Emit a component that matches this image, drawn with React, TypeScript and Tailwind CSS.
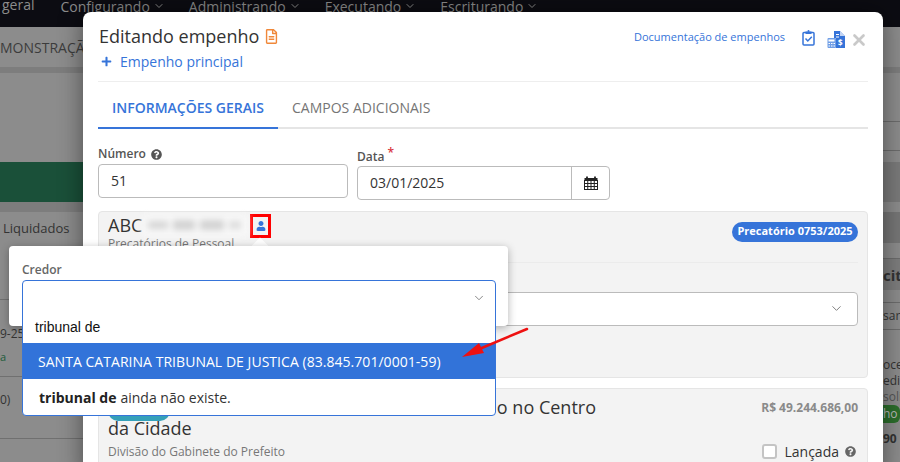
import { ChevronDown, X } from "lucide-react";
import { FaPlus, FaQuestionCircle, FaRegFileAlt, FaUser } from "react-icons/fa";

const BudgetIcon = () => (
  <svg width="20" height="17" viewBox="0 0 20 17" className="shrink-0">
    <path d="M7 0h6l5 5v12H7z" fill="#3674d9" />
    <path d="M13 0l5 5h-5z" fill="#fff" opacity="0.7" />
    <path d="M9 3h3v1H9zM9 5.500h3v1H9z" fill="#fff" />
    <rect x="0" y="7" width="9" height="10" rx="1" fill="#fff" />
    <rect x="0.500" y="7" width="8.500" height="10" rx="1" fill="#6f9ee6" />
    <rect x="1.500" y="8.500" width="6" height="2" fill="#fff" />
    <path d="M1.500 12h1.500v1H1.500zM4 12h1.500v1H4zM6.500 12H8v1H6.500zM1.500 14.500h1.500v1H1.500zM4 14.500h1.500v1H4zM6.500 14.500H8v1H6.500z" fill="#fff" />
    <text x="11" y="14.500" fontSize="8" fontWeight="700" fill="#fff" fontFamily="'Open Sans', sans-serif">$</text>
  </svg>
);

const ClipboardIcon = () => (
  <svg width="13" height="16" viewBox="0 0 13 16" className="shrink-0">
    <rect x="1" y="2.500" width="11" height="12.500" rx="1" fill="none" stroke="#3674d9" strokeWidth="1.500" />
    <rect x="3.500" y="1.500" width="6" height="2.500" fill="#3674d9" />
    <rect x="5.500" y="0" width="2" height="2" rx="1" fill="#3674d9" />
    <path d="M3.500 8.500l2.300 2.500 4-4.300" fill="none" stroke="#3674d9" strokeWidth="1.500" />
  </svg>
);

const CalendarIcon = () => (
  <svg width="14" height="14" viewBox="0 0 14 14" className="shrink-0">
    <path d="M3 0.500v3M11 0.500v3" stroke="#222" strokeWidth="1.800" />
    <rect x="0.500" y="2" width="13" height="3" fill="#222" />
    <rect x="0.500" y="4.500" width="13" height="9" fill="none" stroke="#222" />
    <path d="M3.750 5v8M7 5v8M10.250 5v8M1 7.500h12M1 10.500h12" stroke="#222" strokeWidth="1" />
  </svg>
);

const NavItem = ({ label }: { label: string }) => (
  <div className="flex items-center gap-[3px]">
    <span>{label}</span>
    <ChevronDown size={12} strokeWidth={2} />
  </div>
);

const Background = () => (
  <div className="flex h-full flex-col">
    <div className="h-[27px] shrink-0 bg-[#0c0c12] text-[14px] leading-[9px] text-[#8c8c8c]">
      <div className="flex gap-[24px] pl-[2px]">
        <span className="mr-[2px]">geral</span>
        <NavItem label="Configurando" />
        <NavItem label="Administrando" />
        <NavItem label="Executando" />
        <NavItem label="Escriturando" />
      </div>
    </div>
    <div className="flex min-h-0 flex-1 justify-between bg-[#8c8c8c] text-[#333]">
      <div className="flex w-[83px] flex-col text-[13px]">
        <div className="flex h-[40px] shrink-0 items-center text-[14px] whitespace-nowrap text-[#3c3c3c]">MONSTRAÇÃ</div>
        <div className="h-[6px] shrink-0 bg-[#7d7d7d]" />
        <div className="h-[89px] shrink-0" />
        <div className="h-[40px] shrink-0 bg-[#1a5039]" />
        <div className="h-[10px] shrink-0 bg-[#7d7d7d]" />
        <div className="flex h-[33px] shrink-0 items-center pl-[3px]">Liquidados</div>
        <div className="h-[54px] shrink-0" />
        <div className="h-[77px] shrink-0 border-t border-[#707070] pt-[26px] text-[12px] leading-[16px]">
          <div>9-25)</div>
          <div className="mt-[8px] text-[11px] leading-[14px] text-[#1d5c3a]">a</div>
        </div>
        <div className="h-[62px] shrink-0 border-t border-[#707070] pt-[15px] text-[12px] leading-[16px]">0)</div>
        <div className="flex-1 border-t border-[#707070]" />
      </div>
      <div className="flex w-[17px] flex-col overflow-hidden text-[12px] leading-[16px] whitespace-nowrap">
        <div className="h-[40px] shrink-0" />
        <div className="h-[6px] shrink-0 bg-[#7d7d7d]" />
        <div className="h-[48px] shrink-0" />
        <div className="h-[29px] shrink-0 border-t border-[#6c6c6c]" />
        <div className="h-[12px] shrink-0 border-t border-[#6c6c6c]" />
        <div className="h-[40px] shrink-0 bg-[#7a7a7a]" />
        <div className="h-[10px] shrink-0" />
        <div className="h-[31px] shrink-0 bg-[#767676]" />
        <div className="h-[15px] shrink-0" />
        <div className="flex h-[32px] shrink-0 items-center border-t border-[#6c6c6c] bg-[#7d7d7d] text-[15px] font-bold">cit</div>
        <div className="h-[12px] shrink-0" />
        <div className="flex h-[28px] shrink-0 items-center border-y border-[#6c6c6c]">sar</div>
        <div className="h-[27px] shrink-0" />
        <div>oces</div>
        <div>edic</div>
        <div className="text-[#555]">solic</div>
        <div className="h-[18px] shrink-0 rounded-r-[6px] bg-[#2c6e2c] leading-[18px] text-[#bbb]">ho</div>
        <div className="mt-[8px] font-bold">90</div>
      </div>
    </div>
  </div>
);

const Modal = () => (
  <div className="absolute top-[12px] left-[83px] h-[470px] w-[800px] rounded-[8px] bg-white px-[15px] shadow-[0_0_24px_rgba(0,0,0,0.45)]">
    <div className="flex h-[69.500px] justify-between border-b border-[#eeeeee] pt-[11px]">
      <div className="flex flex-col pl-[1px]">
        <div className="flex h-[26px] items-center gap-[5px] text-[18px] text-[#333]">
          Editando empenho
          <FaRegFileAlt size={15} className="text-[#f0883a]" />
        </div>
        <div className="mt-[2px] flex items-center gap-[8px] pl-[2px] text-[14px] text-[#3674d9]">
          <FaPlus size={11} />
          Empenho principal
        </div>
      </div>
      <div className="flex h-[26px] items-start pt-[7px] text-[#3674d9]">
        <span className="-mt-[1px] mr-[3px] text-[11px]">Documentação de empenhos</span>
        <div className="ml-[14px]"><ClipboardIcon /></div>
        <div className="mt-[1px] ml-[12px]"><BudgetIcon /></div>
        <X size={18} strokeWidth={3.5} className="mt-[1px] ml-[3px] text-[#c9c9c9]" />
      </div>
    </div>
    <div className="flex h-[47px] items-end border-b-2 border-[#e5e5e5] text-[14px]">
      <div className="-mb-[2px] flex h-[32px] w-[180px] items-start justify-center border-b-2 border-[#3674d9] font-semibold text-[#3674d9]">INFORMAÇÕES GERAIS</div>
      <div className="flex h-[30px] items-start pl-[14px] text-[#757575]">CAMPOS ADICIONAIS</div>
    </div>
    <div className="flex gap-[9px] pt-[16px]">
      <div className="w-[250px]">
        <div className="flex h-[19px] items-center gap-[5px] text-[12px] font-semibold text-[#555]">
          Número
          <FaQuestionCircle size={11} />
        </div>
        <div className="flex h-[34px] items-center rounded-[4px] border border-[#bbbbbb] pl-[12px] text-[14px] text-[#333]">51</div>
      </div>
      <div className="w-[253px]">
        <div className="flex h-[21px] text-[12px] font-semibold text-[#555]">
          <span className="mt-[3px]">Data</span>
          <span className="-mt-[1px] ml-[3px] text-[12px] text-[#d9363e]">*</span>
        </div>
        <div className="flex h-[34px] rounded-[4px] border border-[#bbbbbb] text-[14px] text-[#333]">
          <div className="flex flex-1 items-center pl-[12px]">03/01/2025</div>
          <div className="flex w-[38px] items-center justify-center border-l border-[#bbbbbb]">
            <CalendarIcon />
          </div>
        </div>
      </div>
    </div>
    <div className="mt-[11px] h-[167px] rounded-[4px] border border-[#e5e5e5] bg-[#f3f3f3] px-[9px]">
      <div className="flex h-[51px] items-start justify-between border-b border-[#ebebeb]">
        <div className="flex flex-col">
          <div className="flex h-[27px] items-center text-[18px] text-[#333]">
            ABC
            <div className="flex h-[21px] w-[106px] items-center gap-[5px] bg-[#f8f8f8] px-[6px] blur-[3px]">
              <div className="h-[8px] w-[20px] bg-[#d6d6d6]" />
              <div className="h-[10px] w-[22px] bg-[#d2d2d2]" />
              <div className="h-[10px] w-[24px] bg-[#d2d2d2]" />
              <div className="h-[8px] w-[12px] bg-[#dcdcdc]" />
            </div>
            <div className="mt-[2px] ml-[2px] flex h-[24px] w-[21px] items-center justify-center border-[3px] border-[#ff0000]">
              <FaUser size={10} className="text-[#3674d9]" />
            </div>
          </div>
          <div className="-mt-[4px] text-[12px] text-[#777]">Precatórios de Pessoal</div>
        </div>
        <div className="mt-[10px] flex h-[20px] w-[126px] items-center justify-center rounded-[10px] bg-[#3674d9] text-[11px] font-bold text-white">Precatório 0753/2025</div>
      </div>
      <div className="mt-[29px] ml-[300px] flex h-[34px] items-center justify-end rounded-[4px] border border-[#bbbbbb] bg-white pr-[13px] text-[#777]">
        <ChevronDown size={15} strokeWidth={1.5} />
      </div>
    </div>
    <div className="mt-[10px] flex h-[100px] justify-between rounded-[4px] border border-[#e5e5e5] bg-[#f3f3f3] px-[9px] pt-[8px]">
      <div className="w-[488px]">
        <div className="flex h-[22px] items-start justify-between text-[18px] leading-[22px] text-[#333]">
          <div className="mt-[3px] h-[21px] w-[62px] rounded-[10px] bg-[#35a0b8]" />
          <span className="-mt-[1px]">o no Centro</span>
        </div>
        <div className="h-[22px] text-[18px] leading-[18px] text-[#333]">da Cidade</div>
        <div className="mt-[2px] text-[12px] text-[#777]">Divisão do Gabinete do Prefeito</div>
      </div>
      <div className="flex flex-col items-end">
        <div className="flex h-[22px] items-center text-[12px] font-bold text-[#8a8a8a]">R$ 49.244.686,00</div>
        <div className="mt-[22px] mr-[2px] flex items-center text-[14px] text-[#333]">
          <div className="mr-[7px] h-[15px] w-[15px] rounded-[3px] border-2 border-[#c4c4c4] bg-white" />
          Lançada
          <FaQuestionCircle size={11} className="ml-[6px] text-[#666]" />
        </div>
      </div>
    </div>
  </div>
);

const CredorPopover = () => (
  <>
    <div className="absolute top-[240px] left-[254px] h-[12px] w-[12px] rotate-45 bg-white" />
    <div className="absolute top-[246px] left-[9px] h-[80px] w-[499px] rounded-[4px] bg-white px-[13px] pt-[15px] shadow-[0_2px_8px_rgba(0,0,0,0.3)]">
      <div className="text-[12px] leading-[17px] font-semibold text-[#666]">Credor</div>
    </div>
    <div className="absolute top-[280px] left-[22px] flex h-[136px] w-[474px] flex-col rounded-[4px] border border-[#3674d9] bg-white">
      <div className="flex h-[33px] items-center justify-end pr-[9px] text-[#777]">
        <ChevronDown size={14} strokeWidth={1.5} />
      </div>
      <div className="flex h-[27px] items-center pl-[12px] font-['Liberation_Sans',sans-serif] text-[14px] text-[#111]">tribunal de</div>
      <div className="mt-[2px] flex h-[36px] items-center bg-[#3273d9] pl-[15px] text-[14px] tracking-[0.04px] whitespace-nowrap text-white">SANTA CATARINA TRIBUNAL DE JUSTICA (83.845.701/0001-59)</div>
      <div className="flex flex-1 items-center pl-[16px] text-[14px] text-[#333]">
        <b className="mr-[4px] font-bold text-[#222]">tribunal de</b>
        ainda não existe.
      </div>
    </div>
  </>
);

export default function App() {
  return (
    <div className="relative h-[462px] w-[900px] overflow-hidden font-['Open_Sans',sans-serif]">
      <Background />
      <Modal />
      <CredorPopover />
      <svg width="80" height="40" viewBox="0 0 80 40" className="absolute top-[325px] left-[455px]">
        <path d="M72 4L22 25" stroke="#ee1111" strokeWidth="2.500" strokeLinecap="round" />
        <path d="M7 32L24 18L29 28z" fill="#ee1111" />
      </svg>
    </div>
  );
}
